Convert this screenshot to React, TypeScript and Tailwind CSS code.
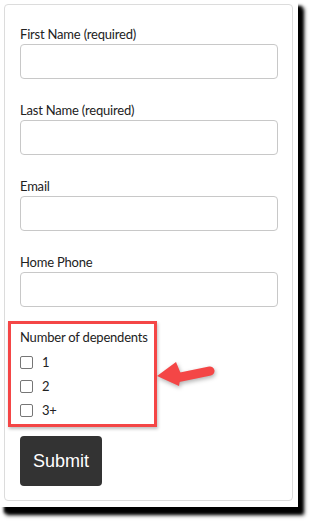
const fields = ["First Name (required)", "Last Name (required)", "Email", "Home Phone"]

const dependents = ["1", "2", "3+"]

export default function App() {
  return (
    <div className="min-h-screen bg-white font-['Lato',sans-serif] text-[13px] tracking-[-0.2px] text-[#222]">
      <div className="relative w-[298px] bg-white pt-[4px] pl-[4px] pr-[5px] pb-[6px] shadow-[4px_6px_3px_#000,6px_8px_4px_#000]">
        <form className="rounded-[4px] border border-[#dcdcdc] bg-white pt-[19px] pb-[14px] pl-[15px] pr-[14px]">
          {fields.map((label, i) => (
            <div key={label} className={i === fields.length - 1 ? "mb-[14px]" : "mb-[21px]"}>
              <label className="block h-[20px] leading-[20px]">{label}</label>
              <input
                type="text"
                className="block h-[35px] w-full rounded-[4px] border border-[#c8c8c8] bg-white outline-none"
              />
            </div>
          ))}

          {/* annotated group */}
          <div className="-ml-[12px] w-[149px] border-[3px] border-[#f44646] pt-[3px] pb-[2px] pl-[9px] shadow-[1px_2px_3px_rgba(0,0,0,0.25)]">
            <div className="h-[20px] leading-[20px]">Number of dependents</div>
            <div className="mt-[3px] flex flex-col">
              {dependents.map((d) => (
                <label key={d} className="flex h-[24px] items-center gap-[9px]">
                  <input
                    type="checkbox"
                    className="h-[13px] w-[13px] appearance-none rounded-[2px] border border-[#767676] bg-white"
                  />
                  <span className="leading-[20px]">{d}</span>
                </label>
              ))}
            </div>
          </div>

          <button
            type="button"
            className="mt-[9px] flex h-[50px] w-[82px] items-center justify-center rounded-[4px] bg-[#333] font-['Liberation_Sans',Arial,sans-serif] text-[18px] tracking-normal text-white"
          >
            Submit
          </button>
        </form>

        {/* arrow pointing at the group */}
        <svg
          className="absolute left-[150px] top-[355px] drop-shadow-[1px_2px_2px_rgba(0,0,0,0.3)]"
          width="70"
          height="40"
          viewBox="150 355 70 40"
        >
          <line x1="176" y1="378" x2="210" y2="371" stroke="#f44646" strokeWidth="9" strokeLinecap="round" />
          <polygon points="157,376 176,362 181,374 179,386" fill="#f44646" />
        </svg>
      </div>
    </div>
  )
}
